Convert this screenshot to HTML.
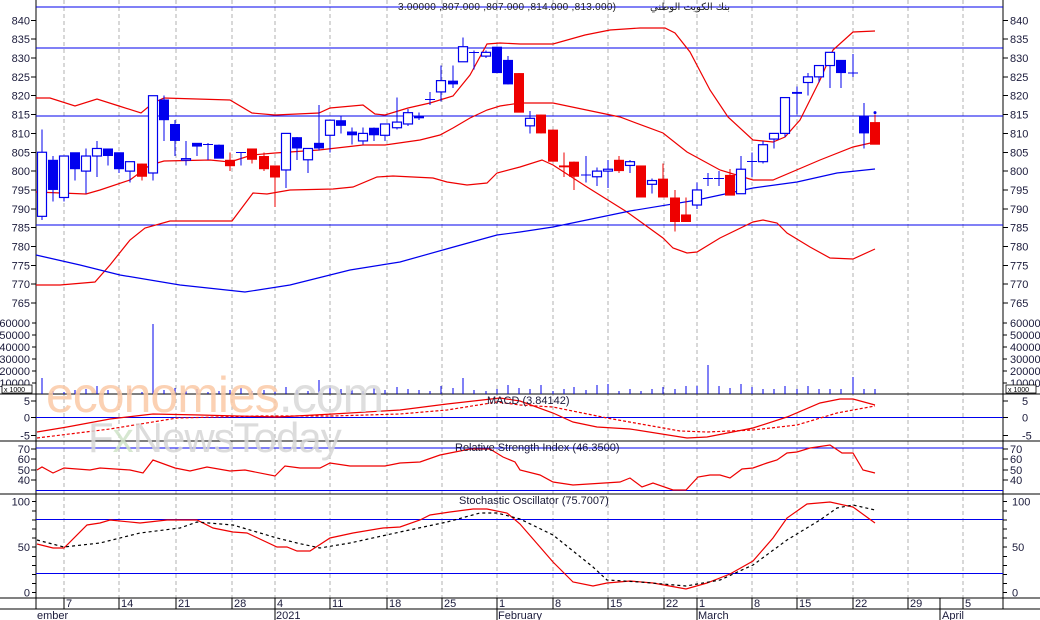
<!DOCTYPE html>
<html><head><meta charset="utf-8">
<style>
html,body{margin:0;padding:0;background:#fff;}
body{width:1040px;height:620px;overflow:hidden;position:relative;font-family:"Liberation Sans",sans-serif;}
svg{position:absolute;left:0;top:0;}
.t{font-family:"Liberation Sans",sans-serif;font-size:11px;fill:#1a1a3a;}
.wm{position:absolute;font-family:"Liberation Sans",sans-serif;white-space:nowrap;}
</style></head><body>
<svg id="s" width="1040" height="620" xmlns="http://www.w3.org/2000/svg"></svg>
<div class="wm" style="left:46px;top:366px;font-size:50px;letter-spacing:-1px;color:#fbc9a6;opacity:.85">economies<span style="color:#d9d9d9">.com</span></div>
<div class="wm" style="left:88px;top:414px;font-size:42px;letter-spacing:-1px;color:#d6d6d6;opacity:.85">F<span style="color:#cfe3c8">x</span>NewsToday</div>
<script>
var s=document.getElementById('s'),h='';
function L(x1,y1,x2,y2,c,w,d){h+='<line x1="'+x1+'" y1="'+y1+'" x2="'+x2+'" y2="'+y2+'" stroke="'+c+'" stroke-width="'+(w||1)+'"'+(d?' stroke-dasharray="'+d+'"':'')+' shape-rendering="crispEdges"/>';}
function P(pts,c,d){h+='<polyline fill="none" stroke="'+c+'" stroke-width="1.2" points="'+pts+'"'+(d?' stroke-dasharray="'+d+'"':'')+'/>';}
function T(x,y,t,a){h+='<text class="t" x="'+x+'" y="'+y+'"'+(a?' text-anchor="'+a+'"':'')+'>'+t+'</text>';}
var X0=36,X1=1003;
var vx=[64,119,176,232,275,330,387,442,497,553,608,664,697,752,797,853,908,963];
vx.forEach(function(x){L(x,0,x,598,'#b0b0b0',1,'4,3');});
L(X0,0,X0,609,'#000');L(X1,0,X1,609,'#000');
[394,441,494,598,609].forEach(function(y){L(0,y,1040,y,'#000');});
function py(p){return 20.3+(840-p)*3.77;}
for(var p=765;p<=840;p+=5){var y=py(p);T(30,y+4,p,'end');T(1010,y+4,p);L(X0-5,y,X0,y,'#000');L(X1,y,X1+5,y,'#000');}
[7,48,116,225].forEach(function(y){L(X0,y,X1,y,'#0000ee');});
P('36,98 50,98 75,106 97,99 119,106 141,113 153,103 164,98 230,100 252,113 275,115 319,113 330,108 363,105 375,114 385,115 408,108 430,103 453,96 470,75 487,44 500,43 520,44 553,44 585,35 610,30 640,28 665,28 675,33 690,52 710,90 728,117 753,140 773,142 785,137 800,120 820,80 833,50 853,32 875,31','#ee0000');
P('36,192 86,194 100,190 130,180 150,165 164,161 210,160 230,162 252,155 275,153 319,150 363,145 385,145 420,140 440,135 453,128 470,118 487,110 500,106 520,103 553,103 620,117 663,133 687,152 720,170 753,180 773,180 820,160 853,147 875,142','#ee0000');
P('36,285 60,285 95,282 110,265 130,240 145,228 170,221 232,221 253,193 267,194 290,190 333,189 353,187 377,177 393,176 433,178 447,182 467,185 487,183 497,173 520,167 542,160 553,165 587,187 627,212 663,238 673,248 687,253 697,252 720,238 753,222 763,220 777,223 787,233 810,247 830,258 853,259 875,249','#ee0000');
P('36,255 80,265 120,275 180,285 245,292 290,285 350,270 400,262 450,248 497,235 520,232 553,227 630,211 697,200 753,188 797,182 837,173 875,169','#0000ee');
var C=[[42,805,788,811,787,'h'],[53,803,795,804,792,'f'],[64,804,793,804,792,'h'],[75,805,800.5,805,797.5,'f'],[86,804,800,806,794,'h'],[97,806,804,808,798.5,'h'],[108,806,804,806,801.5,'f'],[119,805,800.5,805,799.5,'f'],[130,802.5,800,802.5,797,'h'],[142,802,798.5,802,797.5,'r'],[153,820,799.5,820,797.5,'h'],[164,819,813.5,820,808,'f'],[175,812.5,808,813.5,804,'f'],[186,803.3,803,808,801.5,'h'],[197,807.5,806.5,807.5,804,'f'],[208,807,807,807.5,803,'c'],[219,807,803.3,807,803.3,'f'],[230,803,801.3,805,800,'r'],[241,805,805,805,801.5,'c'],[252,806,803,806,802,'r'],[264,804,800.5,805,800,'r'],[275,801.5,798.3,801.5,790.5,'r'],[286,810,800.3,810,795.5,'h'],[297,809,806,809,803,'f'],[308,806,803,806,799.5,'h'],[319,807.5,806,817.5,805.5,'f'],[330,813.5,809.5,813.5,805,'h'],[341,813.5,812,814.5,810,'f'],[352,810.5,809.5,811.5,807,'f'],[363,810,808,811.5,807,'h'],[374,811.5,809.5,811.5,808,'f'],[385,812.5,809.5,812.5,808,'h'],[397,813,811.5,819.5,811,'h'],[408,815.5,812.5,816.5,812,'h'],[419,814.5,814,815.5,813.5,'f'],[430,819,819,821,817.5,'c'],[441,824,821,828,818.5,'h'],[453,824,823,828,822,'f'],[463,833,829,835.5,829,'h'],[474,831.5,831.5,832,827,'c'],[486,831.5,830.5,832,830,'h'],[497,833,826,833,826,'f'],[508,829.5,823,830.5,823,'f'],[519,826,815.5,826,815.5,'r'],[530,814,812,816,810,'h'],[541,815,810,815,810,'r'],[553,811,802.5,811,802.5,'r'],[564,801.5,801,805,798.5,'r'],[574,802.5,798.5,802.5,795,'r'],[586,799,799,804,797,'c'],[597,800,798.5,801,796,'h'],[608,800.5,800,803,795.5,'h'],[619,803,800,804,799.5,'r'],[630,802.5,801.5,803,799.5,'h'],[641,801.5,793,801.5,793,'r'],[652,797.5,796.5,798,794,'h'],[663,798,793,802,793,'r'],[675,793,786.5,795,784,'r'],[686,788.5,786.5,793,786.5,'r'],[697,795,791,797,790,'h'],[708,798,798,799.5,796,'c'],[719,798,798,800,796,'c'],[730,799,793.5,800.5,793.5,'r'],[741,800.5,794,804,794,'h'],[752,802.5,802.5,805,798.5,'c'],[763,807,802.5,808,802,'h'],[774,810,808.5,810,806,'h'],[785,819.5,810,819.5,809,'h'],[797,821,820.5,822.5,815,'f'],[808,825,823.5,826,820,'h'],[819,828,825,828,823.5,'h'],[830,831.5,828,831.5,822,'h'],[841,829.5,826,829.5,822,'f'],[853,826,826,831,825,'c'],[864,814.5,810,818,806,'f'],[875,813,807,815,807,'r']];
C.forEach(function(c){var x=c[0],col=c[5]=='r'?'#ee0000':'#0000ee';
 L(x,py(c[3]),x,py(c[4]),col);
 var y1=py(c[1]),y2=py(c[2]);
 if(c[5]=='c'){L(x-5,y1,x+5,y1,col);return;}
 if(y2-y1<1.5)y2=y1+1.5;
 if(c[5]=='h')h+='<rect x="'+(x-4.5)+'" y="'+y1+'" width="9" height="'+(y2-y1)+'" fill="#fff" stroke="'+col+'" stroke-width="1.2"/>';
 else h+='<rect x="'+(x-5)+'" y="'+y1+'" width="10" height="'+(y2-y1)+'" fill="'+col+'"/>';
});
h+='<circle cx="875" cy="'+py(815.5)+'" r="1.5" fill="#0000ee"/>';
var vy=[10000,20000,30000,40000,50000,60000];
vy.forEach(function(v){var y=395-v*0.0012;T(30,y+4,v,'end');T(1010,y+4,v);L(X0-4,y,X0,y,'#000');L(X1,y,X1+4,y,'#000');});
h+='<rect x="2" y="385" width="30" height="8" fill="#fff" stroke="#000" stroke-width=".8"/><text x="4" y="392" style="font:7px Liberation Sans,sans-serif">x 1000</text>';
h+='<rect x="1006" y="385" width="30" height="8" fill="#fff" stroke="#000" stroke-width=".8"/><text x="1008" y="392" style="font:7px Liberation Sans,sans-serif">x 1000</text>';
var vh=[16,3,2,4,5,8,4,3,5,2,70,4,6,3,5,2,3,4,6,3,4,3,7,4,3,14,8,5,4,3,6,4,7,5,4,3,8,6,16,4,3,5,9,6,5,9,3,5,7,4,9,10,3,5,3,5,7,5,8,8,29,8,6,10,7,5,5,8,5,8,5,5,5,17,5,5,8,5];
C.forEach(function(c,i){var v=vh[i]||4;L(c[0],394,c[0],394-v,'#0000ee');});
[[5,401],[0,417.5],[-5,435.5]].forEach(function(a){T(30,a[1]+4,a[0],'end');T(1022,a[1]+4,a[0]);L(X1,a[1],X1+5,a[1],'#000');L(X0-5,a[1],X0,a[1],'#000');});
L(X0,417.5,X1,417.5,'#0000ee');
P('37,432 67,427 110,419 153,414 200,415 277,417 333,414 400,410 447,404 500,398 520,401 553,413 573,422 597,427 630,429 687,438 707,437 753,428 787,417 820,403 840,399 853,399 875,405','#ee0000');
P('37,438 110,429 177,418 260,416 333,416 400,414 447,410 497,402 520,405 553,407 607,418 680,431 707,432 753,430 797,425 837,413 875,406','#ee0000','3,2');
T(487,404,'MACD (3.84142)');
[[70,449],[60,459],[50,470],[40,480]].forEach(function(a){T(30,a[1]+4,a[0],'end');T(1010,a[1]+4,a[0]);L(X1,a[1],X1+5,a[1],'#000');L(X0-5,a[1],X0,a[1],'#000');});
L(X0,448,X1,448,'#0000ee');L(X0,490.7,X1,490.7,'#0000ee');
P('37,470 42,467 53,473 64,468 90,470 100,468 130,470 143,473 153,460 175,468 190,471 207,467 230,471 245,470 275,476 285,466 300,468 320,468 330,463 350,466 385,466 400,463 420,462 440,455 450,453 470,449 490,449 503,457 515,462 520,470 540,475 553,482 573,485 620,482 630,478 642,487 653,483 673,490 686,490 698,477 710,475 720,475 730,478 742,469 753,468 767,463 777,460 787,453 797,452 810,448 830,445 842,453 853,453 863,470 875,473','#ee0000');
T(455,451,'Relative Strength Index (46.3500)');
[[100,501.7],[50,547],[0,592.7]].forEach(function(a){T(30,a[1]+4,a[0],'end');T(1012,a[1]+4,a[0]);});
for(var k=0;k<=10;k++){var y=501.7+k*9.1;L(X1,y,X1+4,y,'#000');L(X0-4,y,X0,y,'#000');}
L(X0,519.7,X1,519.7,'#0000ee');L(X0,573.5,X1,573.5,'#0000ee');
P('37,544 53,548 64,548 87,525 100,523 110,520 140,523 167,520 197,520 213,528 233,532 247,533 277,547 287,547 297,551 310,551 330,538 353,533 383,528 400,527 420,520 430,515 450,512 473,509 487,509 507,513 520,524 540,547 553,562 573,582 593,586 607,583 630,581 653,583 686,589 707,583 730,574 753,561 773,538 787,518 807,504 830,502 853,507 875,523','#ee0000');
P('37,540 64,547 100,543 140,533 180,528 197,522 233,525 277,538 297,543 320,548 350,543 400,532 447,522 480,513 497,513 520,519 553,535 593,567 607,580 640,582 686,586 720,580 753,565 787,540 820,520 837,508 853,505 875,510','#000','3,3');
T(459,504,'Stochastic Oscillator (75.7007)');
var dl=['7','14','21','28','4','11','18','25','1','8','15','22','1','8','15','22','29','5'];
vx.forEach(function(x,i){L(x,598,x,609,'#000');T(x+2,607,dl[i]);});
T(37,619,'ember');T(276,619,'2021');T(498,619,'February');T(698,619,'March');T(942,619,'April');
[275,497,697,940].forEach(function(x){L(x,609,x,620,'#000');});
L(940,598,940,609,'#000');
h+='<text x="398" y="10" textLength="218" style="font:10px Liberation Sans,sans-serif;fill:#222">3.00000 ,807.000 ,807.000 ,814.000 ,813.000)</text>';
h+='<text x="650" y="10" text-anchor="end" style="font:10px \'DejaVu Sans\',sans-serif;fill:#222" direction="rtl">بنك الكويت الوطني</text>';
s.innerHTML=h;
</script>
</body></html>
